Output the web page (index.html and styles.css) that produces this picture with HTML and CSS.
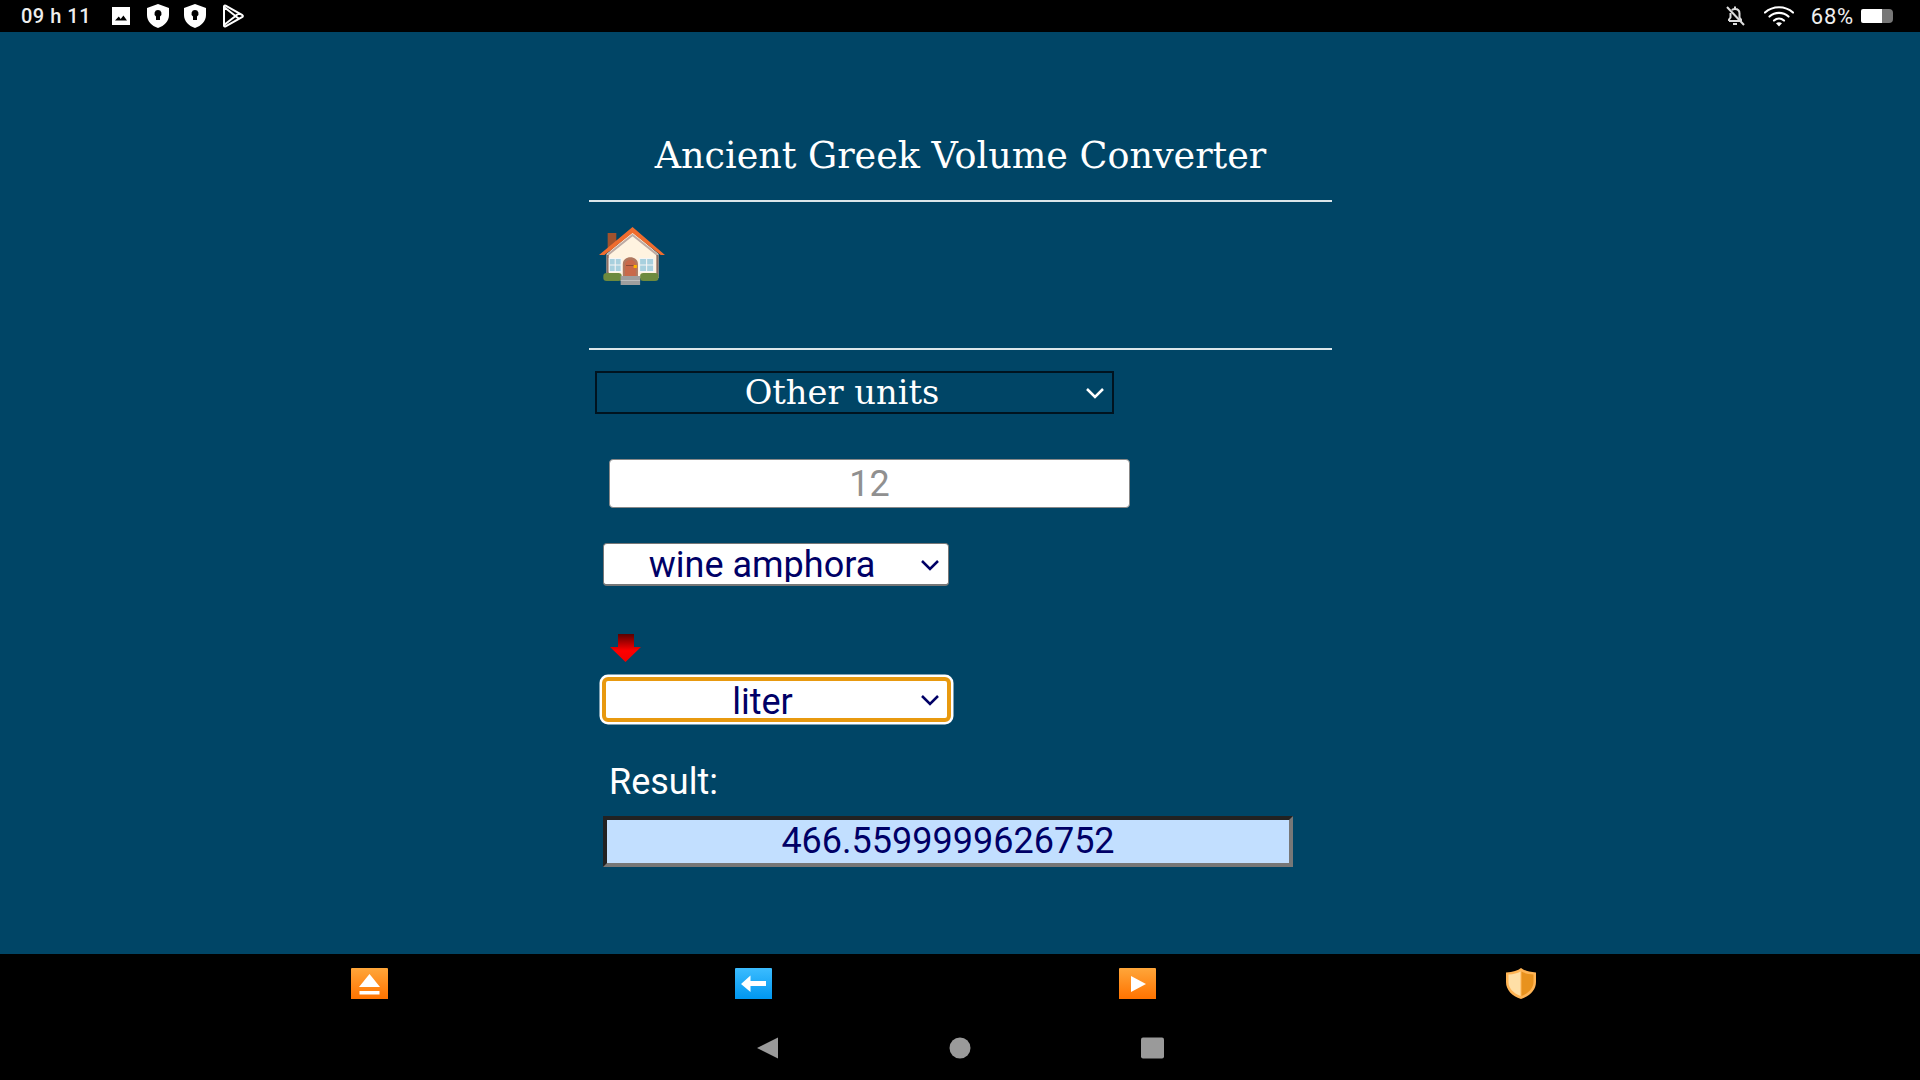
FILE: index.html
```html
<!DOCTYPE html>
<html lang="en">
<head>
<meta charset="UTF-8">
<title>Ancient Greek Volume Converter</title>
<link rel="stylesheet" href="styles.css">
</head>
<body>
<div class="statusbar">
    <div class="status-left">
        <span class="clock">09 h 11</span>
        <svg class="ic-image" width="20" height="20" viewBox="0 0 20 20"><path fill="#fff" fill-rule="evenodd" d="M1 1h18v18H1z M4 14.500h12l-3.600-5-2.700 3.400-1.900-2.300z"/></svg>
        <svg class="ic-shield" width="24" height="26" viewBox="0 0 24 26"><path fill="#fff" fill-rule="evenodd" d="M12 1l11 4v7c0 6-4.600 11-11 13C5.600 23 1 18 1 12V5z M12 7a3.500 3.500 0 0 0-2 6.400V17h4v-3.600A3.500 3.500 0 0 0 12 7z"/></svg>
        <svg class="ic-shield" width="24" height="26" viewBox="0 0 24 26"><path fill="#fff" fill-rule="evenodd" d="M12 1l11 4v7c0 6-4.600 11-11 13C5.600 23 1 18 1 12V5z M12 7a3.500 3.500 0 0 0-2 6.400V17h4v-3.600A3.500 3.500 0 0 0 12 7z"/></svg>
        <svg class="ic-play" width="22" height="24" viewBox="0 0 22 24"><path fill="none" stroke="#fff" stroke-width="2" stroke-linejoin="round" d="M2 2.500c0-1 .8-1.300 1.600-.9L20 10.800c1.200.7 1.200 1.700 0 2.400L3.600 22.400c-.8.400-1.600.1-1.600-.9z M2 3l11.500 9L2 21 M13.500 12l3.500-3 M13.500 12l3.500 3"/></svg>
    </div>
    <div class="status-right">
        <svg class="ic-bell" width="20" height="22" viewBox="0 0 20 22"><path fill="none" stroke="#ddd" stroke-width="2" stroke-linejoin="round" d="M4 16h12v-1.500l-1.500-2V8.500C14.500 5.500 12.500 4 10 4c-1.200 0-2.300.4-3.200 1M5.500 8v4.500L4 14.500V16 M8 19h4 M10 1.500V4"/><path stroke="#ddd" stroke-width="2" d="M2 2l17 18"/></svg>
        <svg class="ic-wifi" width="30" height="22" viewBox="0 0 30 22"><g fill="none" stroke="#fff" stroke-width="2.200" stroke-linecap="round"><path d="M1 7.500C9 .5 21 .5 29 7.500"/><path d="M5.500 11.500c5.500-4.800 13.500-4.800 19 0"/><path d="M10 15.500c3-2.600 7-2.600 10 0"/></g><path fill="#fff" d="M15 21.500l-3-3.200c1.800-1.300 4.200-1.300 6 0z"/></svg>
        <span class="battery-text">68%</span>
        <div class="battery"><div class="battery-fill"></div><div class="battery-rest"></div></div>
    </div>
</div>

<div class="main">
    <div class="container">
        <h1>Ancient Greek Volume Converter</h1>
        <hr>
        <div class="home-row">
            <svg width="66" height="58" viewBox="1 0 61 58" preserveAspectRatio="none">
                <rect x="9" y="6" width="8" height="18" fill="#a0522d"/>
                <path fill="#fff3e0" d="M8 27L32 5l24 22v24H8z"/>
                <path fill="none" stroke="#bcaaa4" stroke-width="2" d="M9 28L32 8l23 20"/>
                <rect x="8" y="28" width="2" height="22" fill="#8d6e63"/>
                <rect x="54" y="28" width="2" height="22" fill="#8d6e63"/>
                <path fill="#ef6c2e" d="M32 0L62 28h-4L32 6 6 28H1z"/>
                <path fill="#b0785f" d="M23 49V37c0-9 14-9 14 0v12z"/>
                <path fill="#c9694a" d="M25 49V38c0-7 10-7 10 0v11z"/>
                <rect x="26" y="38" width="8" height="1" fill="#8d4a36"/>
                <rect x="33" y="38" width="3" height="3" fill="#ffb300"/>
                <rect x="10" y="31" width="12" height="14" fill="#f5f5f5"/>
                <rect x="11" y="32" width="4.500" height="5.500" fill="#a8d0de"/>
                <rect x="16.500" y="32" width="4.500" height="5.500" fill="#a8d0de"/>
                <rect x="11" y="38.500" width="4.500" height="5.500" fill="#a8d0de"/>
                <rect x="16.500" y="38.500" width="4.500" height="5.500" fill="#a8d0de"/>
                <rect x="38" y="31" width="14" height="14" fill="#f5f5f5"/>
                <rect x="39" y="32" width="5.500" height="5.500" fill="#a8d0de"/>
                <rect x="45.500" y="32" width="5.500" height="5.500" fill="#a8d0de"/>
                <rect x="39" y="38.500" width="5.500" height="5.500" fill="#a8d0de"/>
                <rect x="45.500" y="38.500" width="5.500" height="5.500" fill="#a8d0de"/>
                <rect x="5" y="46" width="17" height="8" rx="3" fill="#6d8a3e"/>
                <rect x="39" y="46" width="17" height="8" rx="3" fill="#6d8a3e"/>
                <rect x="21" y="49" width="18" height="9" fill="#9e9e9e"/>
                <rect x="21" y="53" width="18" height="1" fill="#bdbdbd"/>
            </svg>
        </div>
        <hr>
        <div class="select-wrap units-wrap">
            <select class="units-select"><option>Other units</option></select>
            <svg class="chevron" width="20" height="12" viewBox="0 0 20 12"><path fill="none" stroke="#fff" stroke-width="2.500" d="M2 2l8 8 8-8"/></svg>
        </div>
        <input class="amount" type="text" placeholder="12">
        <div class="select-wrap from-wrap">
            <select class="unit-select"><option>wine amphora</option></select>
            <svg class="chevron" width="20" height="12" viewBox="0 0 20 12"><path fill="none" stroke="#000066" stroke-width="2.500" d="M2 2l8 8 8-8"/></svg>
        </div>
        <svg class="down-arrow" width="31" height="28" viewBox="0 0 31 28">
            <defs><linearGradient id="red" x1="0" y1="0" x2="0" y2="1"><stop offset="0" stop-color="#5a0000"/><stop offset=".6" stop-color="#ff0000"/><stop offset="1" stop-color="#f00000"/></linearGradient></defs>
            <path fill="url(#red)" d="M8 0h16v13h7L15.500 28 0 13h8z"/>
        </svg>
        <div class="select-wrap to-wrap">
            <select class="unit-select focused"><option>liter</option></select>
            <svg class="chevron" width="20" height="12" viewBox="0 0 20 12"><path fill="none" stroke="#000066" stroke-width="2.500" d="M2 2l8 8 8-8"/></svg>
        </div>
        <div class="result-label">Result:</div>
        <div class="result">466.5599999626752</div>
    </div>
</div>

<div class="bottom">
    <div class="app-icons">
        <div class="app-icon">
            <svg width="37" height="31" viewBox="0 0 37 31">
                <defs>
                    <linearGradient id="orange" x1="0" y1="0" x2="0" y2="1"><stop offset="0" stop-color="#ffa63a"/><stop offset="1" stop-color="#ff7300"/></linearGradient>
                    <linearGradient id="blue" x1="0" y1="0" x2="0" y2="1"><stop offset="0" stop-color="#3cbcff"/><stop offset="1" stop-color="#0097f0"/></linearGradient>
                </defs>
                <path fill="url(#orange)" d="M1 0h35a1 1 0 0 1 1 1v30H0V1a1 1 0 0 1 1-1z"/>
                <path fill="#fff" d="M18.500 6L29 19H8z"/>
                <rect x="8.500" y="23" width="20" height="3.500" fill="#fff"/>
            </svg>
        </div>
        <div class="app-icon">
            <svg width="37" height="31" viewBox="0 0 37 31">
                <path fill="url(#blue)" d="M1 0h35a1 1 0 0 1 1 1v30H0V1a1 1 0 0 1 1-1z"/>
                <path fill="#fff" d="M6 16L15.500 7.500v5.500H31v5H15.500v6z"/>
            </svg>
        </div>
        <div class="app-icon">
            <svg width="37" height="31" viewBox="0 0 37 31">
                <path fill="url(#orange)" d="M1 0h35a1 1 0 0 1 1 1v30H0V1a1 1 0 0 1 1-1z"/>
                <path fill="#fff" d="M12 8l15 8-15 8z"/>
            </svg>
        </div>
        <div class="app-icon">
            <svg width="30" height="31" viewBox="0 0 30 31">
                <path fill="#ffb454" d="M15 0c3 2.500 8 4 15 4.500V14c0 8-6 14-15 17C6 28 0 22 0 14V4.500C7 4 12 2.500 15 0z"/>
                <path fill="#ffdfa6" d="M14.500 3.500V28C7 25 2.500 20 2.500 14V6.500c5-.3 9-1.300 12-3z"/>
                <path fill="#e8921e" d="M15.500 3.500c3 1.700 7 2.700 12 3V14c0 6-4.500 11-12 14z"/>
            </svg>
        </div>
    </div>
    <div class="nav-buttons">
        <svg width="22" height="22" viewBox="0 0 22 22"><path fill="#9a9a9a" d="M21 .5v21L0 11z"/></svg>
        <svg width="22" height="22" viewBox="0 0 22 22"><circle cx="11" cy="11" r="10.500" fill="#9a9a9a"/></svg>
        <svg width="23" height="22" viewBox="0 0 23 22"><rect width="23" height="21" y=".5" rx="2" fill="#9a9a9a"/></svg>
    </div>
</div>
</body>
</html>
```

FILE: styles.css
```css
* {
    margin: 0;
    padding: 0;
    box-sizing: border-box;
}
html, body {
    width: 1920px;
    height: 1080px;
    overflow: hidden;
}
body {
    display: flex;
    flex-direction: column;
    background-color: #004566;
    font-family: Roboto, sans-serif;
}
.statusbar {
    height: 32px;
    background-color: #000;
    color: #eee;
    display: flex;
    justify-content: space-between;
    align-items: center;
    padding: 0 27px 0 21px;
    font-size: 20px;
}
.status-left, .status-right {
    display: flex;
    align-items: center;
}
.clock {
    font-weight: 500;
    letter-spacing: 0.5px;
    margin-right: 20px;
}
.ic-shield {
    margin-left: 15px;
}
.ic-shield + .ic-shield {
    margin-left: 13px;
}
.ic-play {
    margin-left: 15px;
}
.ic-wifi {
    margin-left: 19px;
}
.battery-text {
    margin-left: 17px;
    font-size: 22px;
    letter-spacing: 0.8px;
}
.battery {
    display: flex;
    align-items: center;
    margin-left: 7px;
}
.battery-fill {
    width: 21px;
    height: 14px;
    background-color: #fff;
    border-radius: 2px 0 0 2px;
}
.battery-rest {
    width: 11px;
    height: 14px;
    background-color: #777;
    border-radius: 0 4px 4px 0;
}

.main {
    flex: 1;
}
.container {
    width: 743px;
    margin-left: 589px;
}
h1 {
    font-family: "DejaVu Serif", serif;
    font-weight: normal;
    font-size: 36.500px;
    color: #fff;
    text-align: center;
    line-height: 46px;
    margin-top: 101px;
    margin-bottom: 21px;
}
hr {
    border: none;
    height: 2px;
    background-color: #dbe6ea;
}
.home-row {
    height: 146px;
    padding: 25px 0 0 10px;
}
.select-wrap {
    position: relative;
}
.select-wrap select {
    display: block;
    width: 100%;
    height: 100%;
    appearance: none;
    text-align: center;
    outline: none;
}
.chevron {
    position: absolute;
    top: 50%;
    right: 9px;
    margin-top: -6px;
}
.units-wrap {
    width: 519px;
    height: 43px;
    margin: 21px 0 0 6px;
}
.units-select {
    background-color: #004566;
    border: 2px solid #00131f;
    color: #fff;
    font-family: "DejaVu Serif", serif;
    font-size: 33.700px;
    padding-right: 25px;
}
.amount {
    display: block;
    width: 521px;
    height: 49px;
    margin: 45px 0 0 20px;
    border: 1px solid #888;
    border-radius: 4px;
    background-color: #fff;
    font-family: Roboto, sans-serif;
    font-size: 36px;
    text-align: center;
    outline: none;
}
.amount::placeholder {
    color: #909090;
    opacity: 1;
}
.unit-select {
    background-color: #fff;
    border: 1px solid #777;
    border-width: 1px 1px 2px;
    border-radius: 4px;
    color: #000066;
    font-family: Roboto, sans-serif;
    font-size: 36px;
    padding-right: 28px;
    padding-bottom: 2px;
}
.from-wrap {
    width: 346px;
    height: 43px;
    margin: 35px 0 0 14px;
}
.down-arrow {
    display: block;
    margin: 48px 0 0 21px;
}
.to-wrap {
    width: 349px;
    height: 45px;
    margin: 15px 0 0 13px;
}
.to-wrap .chevron {
    right: 11px;
}
.focused {
    border: 4px solid #e8990f;
    border-radius: 6px;
    box-shadow: 0 0 0 2.500px #fff;
    padding-bottom: 4px;
}
.result-label {
    color: #fff;
    font-size: 36px;
    line-height: 40px;
    margin: 40px 0 0 20px;
}
.result {
    width: 690px;
    height: 51px;
    margin: 14px 0 0 14px;
    border-style: solid;
    border-width: 4px;
    border-color: #222 #777 #777 #222;
    background-color: #c2dfff;
    color: #000066;
    font-size: 36px;
    line-height: 43px;
    text-align: center;
}

.bottom {
    height: 126px;
    background-color: #000;
}
.app-icons {
    display: grid;
    grid-template-columns: repeat(4, 384px);
    width: 1536px;
    margin-left: 177px;
    padding-top: 14px;
}
.app-icon {
    display: flex;
    justify-content: center;
}
.app-icon svg {
    display: block;
}
.nav-buttons {
    display: flex;
    justify-content: center;
    gap: 170px;
    margin-top: 38px;
}
```
